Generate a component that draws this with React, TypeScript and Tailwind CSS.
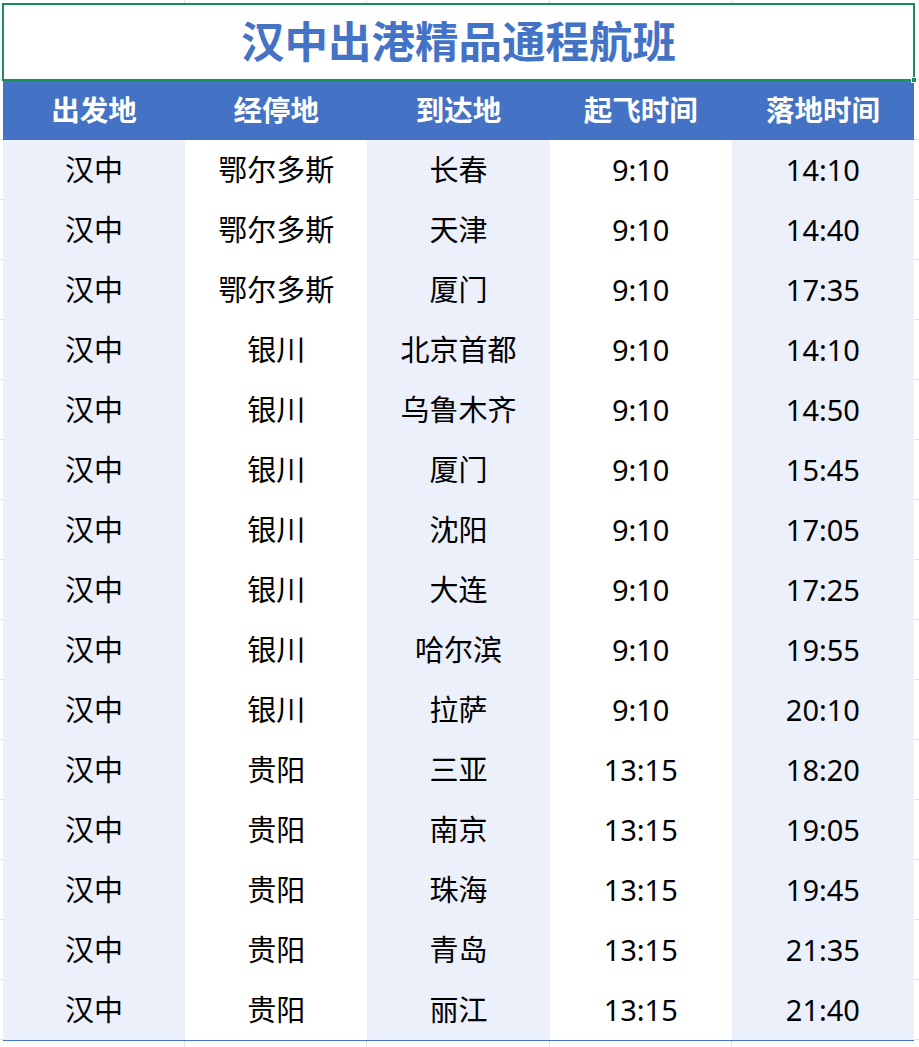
const flights = [
  ['汉中', '鄂尔多斯', '长春', '9:10', '14:10'],
  ['汉中', '鄂尔多斯', '天津', '9:10', '14:40'],
  ['汉中', '鄂尔多斯', '厦门', '9:10', '17:35'],
  ['汉中', '银川', '北京首都', '9:10', '14:10'],
  ['汉中', '银川', '乌鲁木齐', '9:10', '14:50'],
  ['汉中', '银川', '厦门', '9:10', '15:45'],
  ['汉中', '银川', '沈阳', '9:10', '17:05'],
  ['汉中', '银川', '大连', '9:10', '17:25'],
  ['汉中', '银川', '哈尔滨', '9:10', '19:55'],
  ['汉中', '银川', '拉萨', '9:10', '20:10'],
  ['汉中', '贵阳', '三亚', '13:15', '18:20'],
  ['汉中', '贵阳', '南京', '13:15', '19:05'],
  ['汉中', '贵阳', '珠海', '13:15', '19:45'],
  ['汉中', '贵阳', '青岛', '13:15', '21:35'],
  ['汉中', '贵阳', '丽江', '13:15', '21:40'],
];

const headers = ['出发地', '经停地', '到达地', '起飞时间', '落地时间'];

// spreadsheet gridlines peeking out around the table
const GridStrip = ({ h }: { h: string }) => (
  <div className={`ml-[3px] grid w-[911px] grid-cols-5 ${h}`}>
    <div className="border-r border-[#e2e2e2]" />
    <div className="border-r border-[#e2e2e2]" />
    <div className="border-r border-[#e2e2e2]" />
    <div className="border-r border-[#e2e2e2]" />
    <div />
  </div>
);

export default function App() {
  return (
    <div
      className="h-[1047px] w-[919px] overflow-hidden bg-white bg-[repeating-linear-gradient(to_bottom,transparent_0px,transparent_59px,#e2e2e2_59px,#e2e2e2_60px)] bg-[position:0_20px]"
      style={{ fontFamily: '"Noto Sans", "Noto Sans CJK SC", sans-serif' }}
    >
      <GridStrip h="h-[3px]" />

      <div className="relative ml-[2px] flex h-[78px] w-[913px] items-center justify-center border-[2.5px] border-[#1a8c5e] bg-white">
        <h1 className="text-[43.5px] font-bold leading-none text-[#4472c4]">
          汉中出港精品通程航班
        </h1>
        <span className="absolute -bottom-[4px] -right-[4px] h-[6px] w-[6px] border border-white bg-[#1a8c5e]" />
      </div>

      <div className="ml-[3px] w-[911px]">
        <div className="grid h-[59px] grid-cols-5 bg-[#4472c4]">
          {headers.map((h) => (
            <div key={h} className="flex items-center justify-center text-[28.5px] font-bold text-white">
              {h}
            </div>
          ))}
        </div>

        <div className="border-b border-[#4472c4]">
          {flights.map((row, i) => (
            <div key={i} className="grid h-[60px] grid-cols-5 text-[29px] text-black">
              {row.map((cell, j) => (
                <div
                  key={j}
                  className={`flex items-center justify-center ${j % 2 === 0 ? 'bg-[#ecf0fa]' : 'bg-white'}`}
                >
                  {cell}
                </div>
              ))}
            </div>
          ))}
        </div>
      </div>

      <GridStrip h="h-[8px]" />
    </div>
  );
}
